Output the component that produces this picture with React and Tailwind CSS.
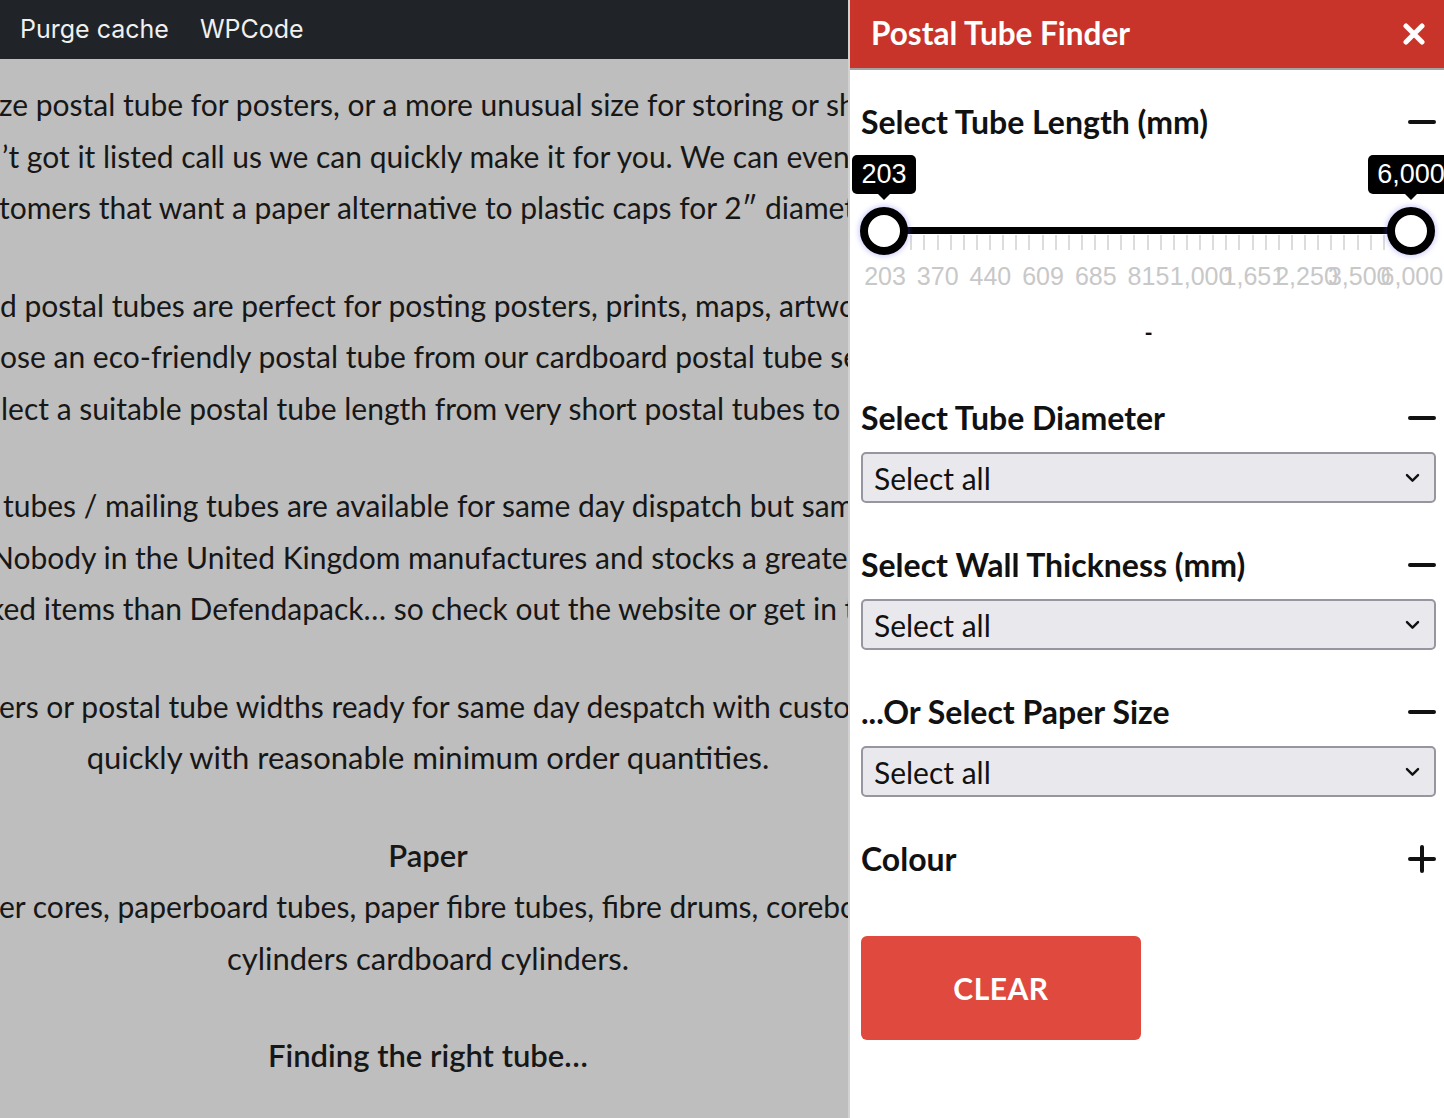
import React from 'react';

const bodyFont = { fontFamily: 'Lato, "Noto Sans", sans-serif' };

const leftLines = [
  [
    { t: 'ze postal tube for posters, or a more unusual size for storing or shipping', ml: '-ml-[1px]' },
    { t: '’t got it listed call us we can quickly make it for you. We can even print', ml: 'ml-[2px]' },
    { t: 'tomers that want a paper alternative to plastic caps for 2″ diameter tubes', ml: '-ml-[1px]' },
  ],
  [
    { t: 'd postal tubes are perfect for posting posters, prints, maps, artwork', ml: 'ml-[0px]' },
    { t: 'ose an eco-friendly postal tube from our cardboard postal tube selection', ml: 'ml-[0px]' },
    { t: 'lect a suitable postal tube length from very short postal tubes to long', ml: 'ml-[1px]' },
  ],
  [
    { t: 'tubes / mailing tubes are available for same day dispatch but same', ml: 'ml-[3px]' },
    { t: 'Nobody in the United Kingdom manufactures and stocks a greater range', ml: '-ml-[9px]' },
    { t: 'ked items than Defendapack… so check out the website or get in touch', ml: '-ml-[11px]' },
  ],
];

function Minus() {
  return <span className="block h-[4px] w-[28px] rounded-full bg-[#111]" />;
}

function Plus() {
  return (
    <span className="relative block h-[28px] w-[28px]">
      <span className="absolute left-0 top-[12px] h-[4px] w-[28px] rounded-full bg-[#111]" />
      <span className="absolute left-[12px] top-0 h-[28px] w-[4px] rounded-full bg-[#111]" />
    </span>
  );
}

function SectionHead({ title, open = true }) {
  return (
    <div className="flex h-[36px] items-center justify-between">
      <h3 className="text-[32px] font-bold leading-[36px] text-[#111]">{title}</h3>
      {open ? <Minus /> : <Plus />}
    </div>
  );
}

function FakeSelect() {
  return (
    <div className="flex h-[51px] w-full items-center justify-between rounded-[5px] border-2 border-[#9696a0] bg-[#e9e9ed] pl-[11px] pr-[12px]">
      <span className="text-[30px] leading-none text-[#111]">Select all</span>
      <svg width="19" height="19" viewBox="0 0 24 24" fill="none" stroke="#111" strokeWidth="3" strokeLinecap="round" strokeLinejoin="round">
        <path d="M5 9l7 7 7-7" />
      </svg>
    </div>
  );
}

function Handle({ value, side }) {
  const pos = side === 'left' ? 'left-[-1px]' : 'left-[526px]';
  return (
    <div className={`absolute top-0 ${pos} flex w-[48px] flex-col items-center`}>
      <div className="relative mt-[5px] flex h-[39px] items-center justify-center whitespace-nowrap rounded-[5px] bg-black px-[9px] text-[27px] leading-none text-white" style={{ fontFamily: '"Liberation Sans", Arial, sans-serif' }}>
        {value}
        <span className="absolute bottom-[-6px] left-1/2 h-0 w-0 -translate-x-1/2 border-x-[6px] border-t-[6px] border-x-transparent border-t-black" />
      </div>
      <div className="mt-[13px] h-[48px] w-[48px] rounded-full border-[8px] border-black bg-white shadow-[0_0_4px_2px_rgba(90,90,255,0.25)]" />
    </div>
  );
}

function RangeSlider() {
  const labels = ['203', '370', '440', '609', '685', '815', '1,000', '1,651', '2,250', '3,500', '6,000'];
  const ticks = Array.from({ length: 41 });
  return (
    <div className="relative mt-[10px] h-[150px]">
      {/* track */}
      <div className="absolute left-[23px] top-[77px] h-[7px] w-[527px] bg-black" />
      {/* ticks */}
      <div className="absolute left-[23px] top-[85px] flex h-[15px] w-[527px] justify-between">
        {ticks.map((_, i) => (
          <span key={i} className="block h-full w-[2px] bg-[#dcdcdc]" />
        ))}
      </div>
      {/* labels */}
      <div className="absolute left-[24px] top-[112px] flex h-[28px] w-[527px] justify-between" style={{ fontFamily: '"Liberation Sans", Arial, sans-serif' }}>
        {labels.map((l) => (
          <span key={l} className="flex w-0 justify-center whitespace-nowrap text-[25px] leading-[28px] text-[#c8c8c8]">
            {l}
          </span>
        ))}
      </div>
      <Handle value="203" side="left" />
      <Handle value="6,000" side="right" />
    </div>
  );
}

export default function App() {
  return (
    <div className="flex h-[1118px] w-[1444px] overflow-hidden" style={bodyFont}>
      {/* page behind overlay */}
      <div className="w-[848px] shrink-0 overflow-hidden bg-[#bebebe]">
        <div className="flex h-[59px] items-center gap-[31px] bg-[#202428] pl-[20px] text-[25px] text-[#f0f0f1]" style={{ fontFamily: 'Inter, Roboto, sans-serif' }}>
          <span>Purge cache</span>
          <span>WPCode</span>
        </div>
        <div className="pt-[20px] text-[31px] leading-[51.5px] text-[#171717]">
          {leftLines.map((para, pi) => (
            <div key={pi} className="mb-[46px] text-[30px]">
              {para.map((line) => (
                <div key={line.t} className={`whitespace-nowrap ${line.ml}`}>
                  {line.t}
                </div>
              ))}
            </div>
          ))}
          <div className="mb-[46px] w-[856px]">
            <div className="-ml-[1px] whitespace-nowrap text-[30px]">ers or postal tube widths ready for same day despatch with custom</div>
            <div className="whitespace-nowrap text-center">quickly with reasonable minimum order quantities.</div>
          </div>
          <div className="w-[856px] whitespace-nowrap text-center font-semibold">Paper</div>
          <div className="mb-[46px] w-[856px]">
            <div className="-ml-[1px] whitespace-nowrap text-[30px]">er cores, paperboard tubes, paper fibre tubes, fibre drums, coreboard</div>
            <div className="whitespace-nowrap text-center">cylinders cardboard cylinders.</div>
          </div>
          <div className="w-[856px] whitespace-nowrap text-center font-semibold">Finding the right tube…</div>
        </div>
      </div>

      {/* finder panel */}
      <aside className="flex w-[596px] shrink-0 flex-col border-l-2 border-[#d2d2d2] bg-white">
        <header className="flex h-[70px] shrink-0 items-center justify-between border-b-2 border-[#a3a3a3] bg-[#c8342a] pl-[21px] pr-[19px]">
          <h2 className="text-[31.5px] font-bold text-white">Postal Tube Finder</h2>
          <svg width="22" height="22" viewBox="0 0 22 22" stroke="white" strokeWidth="5" strokeLinecap="round">
            <path d="M3 3l16 16M19 3L3 19" />
          </svg>
        </header>

        <div className="pl-[11px] pr-[8px] pt-[34px]">
          <SectionHead title="Select Tube Length (mm)" />
          <RangeSlider />
          <div className="mt-[17px] flex h-[30px] items-center justify-center pt-[2px] text-[22px] font-bold leading-none text-[#111]">
            -
          </div>

          <div className="mt-[53px]">
            <SectionHead title="Select Tube Diameter" />
            <div className="mt-[16px]">
              <FakeSelect />
            </div>
          </div>

          <div className="mt-[44px]">
            <SectionHead title="Select Wall Thickness (mm)" />
            <div className="mt-[16px]">
              <FakeSelect />
            </div>
          </div>

          <div className="mt-[44px]">
            <SectionHead title="...Or Select Paper Size" />
            <div className="mt-[16px]">
              <FakeSelect />
            </div>
          </div>

          <div className="mt-[44px]">
            <SectionHead title="Colour" open={false} />
          </div>

          <button className="mt-[59px] flex h-[104px] w-[280px] items-center justify-center rounded-[6px] bg-[#e0493d] text-[30px] font-bold tracking-[0.5px] text-white">
            CLEAR
          </button>
        </div>
      </aside>
    </div>
  );
}
